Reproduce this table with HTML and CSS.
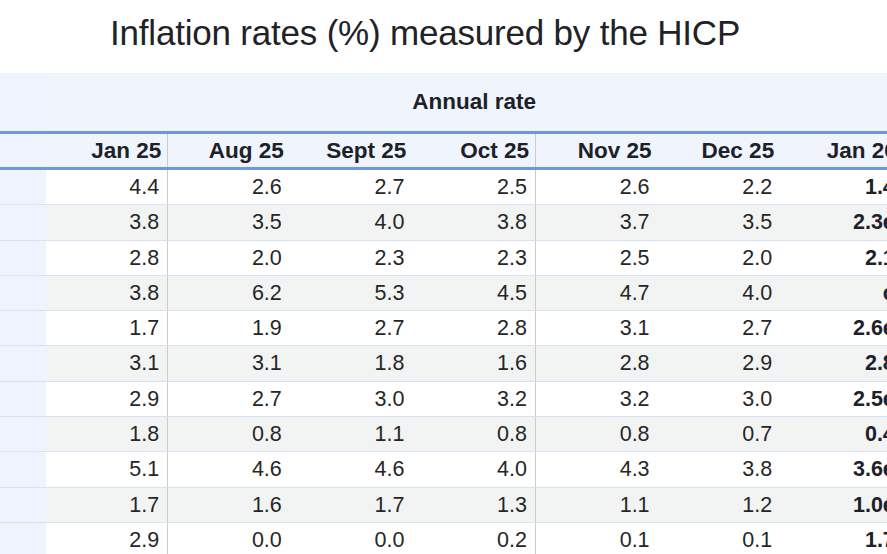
FILE: index.html
```html
<!DOCTYPE html>
<html lang="en">
<head>
<meta charset="utf-8">
<title>Inflation rates (%) measured by the HICP</title>
<link rel="stylesheet" href="styles.css">
</head>
<body>
<div class="page">
  <h1 class="title">Inflation rates (%) measured by the HICP</h1>
  <div class="scroller">
    <table class="hicp">
      <colgroup>
        <col class="col-label">
        <col class="col-month"><col class="col-month"><col class="col-month"><col class="col-month">
        <col class="col-month"><col class="col-month"><col class="col-month">
      </colgroup>
      <thead>
        <tr class="group">
          <th class="label"></th>
          <th colspan="7">Annual rate</th>
        </tr>
        <tr class="months">
          <th class="label"></th>
          <th class="sep">Jan 25</th>
          <th>Aug 25</th>
          <th>Sept 25</th>
          <th class="sep">Oct 25</th>
          <th>Nov 25</th>
          <th>Dec 25</th>
          <th>Jan 26</th>
        </tr>
      </thead>
      <tbody>
        <tr><td class="label"></td><td class="sep">4.4</td><td>2.6</td><td>2.7</td><td class="sep">2.5</td><td>2.6</td><td>2.2</td><td class="latest">1.4</td></tr>
        <tr><td class="label"></td><td class="sep">3.8</td><td>3.5</td><td>4.0</td><td class="sep">3.8</td><td>3.7</td><td>3.5</td><td class="latest">2.3e</td></tr>
        <tr><td class="label"></td><td class="sep">2.8</td><td>2.0</td><td>2.3</td><td class="sep">2.3</td><td>2.5</td><td>2.0</td><td class="latest">2.1</td></tr>
        <tr><td class="label"></td><td class="sep">3.8</td><td>6.2</td><td>5.3</td><td class="sep">4.5</td><td>4.7</td><td>4.0</td><td class="latest">c</td></tr>
        <tr><td class="label"></td><td class="sep">1.7</td><td>1.9</td><td>2.7</td><td class="sep">2.8</td><td>3.1</td><td>2.7</td><td class="latest">2.6e</td></tr>
        <tr><td class="label"></td><td class="sep">3.1</td><td>3.1</td><td>1.8</td><td class="sep">1.6</td><td>2.8</td><td>2.9</td><td class="latest">2.8</td></tr>
        <tr><td class="label"></td><td class="sep">2.9</td><td>2.7</td><td>3.0</td><td class="sep">3.2</td><td>3.2</td><td>3.0</td><td class="latest">2.5e</td></tr>
        <tr><td class="label"></td><td class="sep">1.8</td><td>0.8</td><td>1.1</td><td class="sep">0.8</td><td>0.8</td><td>0.7</td><td class="latest">0.4</td></tr>
        <tr><td class="label"></td><td class="sep">5.1</td><td>4.6</td><td>4.6</td><td class="sep">4.0</td><td>4.3</td><td>3.8</td><td class="latest">3.6e</td></tr>
        <tr><td class="label"></td><td class="sep">1.7</td><td>1.6</td><td>1.7</td><td class="sep">1.3</td><td>1.1</td><td>1.2</td><td class="latest">1.0e</td></tr>
        <tr><td class="label"></td><td class="sep">2.9</td><td>0.0</td><td>0.0</td><td class="sep">0.2</td><td>0.1</td><td>0.1</td><td class="latest">1.7</td></tr>
      </tbody>
    </table>
  </div>
</div>
</body>
</html>
```
FILE: styles.css
```css
html, body {
  margin: 0;
  padding: 0;
  background: #ffffff;
  overflow: hidden;
}

body {
  font-family: "Liberation Sans", Arial, sans-serif;
  color: #262626;
}

.page {
  width: 887px;
  overflow: hidden;
}

.title {
  margin: 13px 0 20px;
  padding-left: 110px;
  font-size: 35px;
  line-height: 40px;
  font-weight: 400;
  letter-spacing: -0.2px;
  color: #1f2226;
  white-space: nowrap;
}

.scroller {
  width: 887px;
  overflow: hidden;
}

.hicp {
  border-collapse: separate;
  border-spacing: 0;
  table-layout: fixed;
  width: 903.8px;
}

.col-label {
  width: 45.6px;
}

.col-month {
  width: 122.6px;
}

.hicp th {
  background: #f0f4fd;
  color: #1d2129;
  font-weight: 700;
  font-size: 22.5px;
  padding: 0 7px 0 6px;
  white-space: nowrap;
  border-bottom: 3px solid #7097de;
}

.group th {
  line-height: 58px;
  text-align: center;
}

.months th {
  line-height: 33px;
  text-align: right;
}

.hicp td {
  font-size: 21.5px;
  line-height: 34.3px;
  padding: 0 9px;
  text-align: right;
  white-space: nowrap;
  border-bottom: 1px solid #d9e2f5;
  background: #ffffff;
}

.hicp tbody tr:nth-child(even) td {
  background: #f2f4f4;
}

.hicp th.label,
.hicp td.label,
.hicp tbody tr:nth-child(even) td.label {
  background: #eff3fd;
  padding: 0;
}

.hicp .sep {
  box-shadow: inset -1px 0 0 #cccccc;
}

.hicp td.latest {
  font-weight: 700;
  color: #1d2129;
}
```
